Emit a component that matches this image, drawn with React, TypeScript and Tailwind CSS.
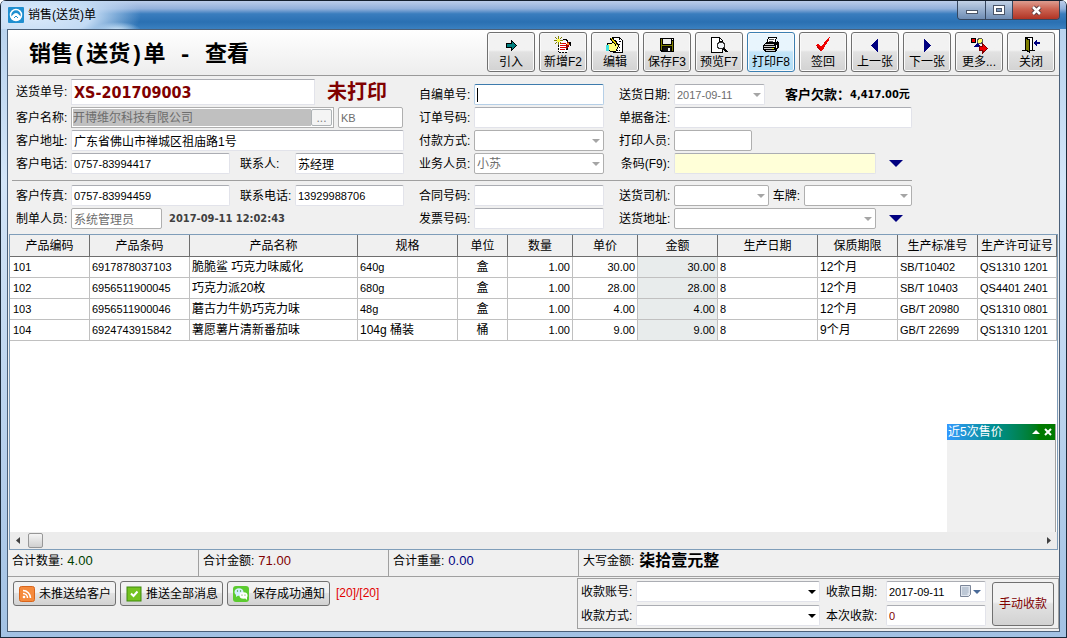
import { useState } from "react";
import type { ReactNode } from "react";
import clsx from "clsx";

const BOLD_FONT = "font-['DejaVu_Sans_Condensed','Noto_Sans_CJK_SC',sans-serif] font-bold";
const BUTTON_FACE = "border-[#707070] bg-linear-to-b from-[#f2f2f2] from-45% via-[#e2e2e2] via-50% to-[#d2d2d2]";

const columns = [
  { title: "产品编码", width: "w-[80px]", align: "text-left" },
  { title: "产品条码", width: "w-[100px]", align: "text-left" },
  { title: "产品名称", width: "w-[168px]", align: "text-left" },
  { title: "规格", width: "w-[100px]", align: "text-left" },
  { title: "单位", width: "w-[50px]", align: "text-center" },
  { title: "数量", width: "w-[65px]", align: "text-right" },
  { title: "单价", width: "w-[65px]", align: "text-right" },
  { title: "金额", width: "w-[80px]", align: "text-right bg-[#e8ecec]" },
  { title: "生产日期", width: "w-[100px]", align: "text-left" },
  { title: "保质期限", width: "w-[80px]", align: "text-left" },
  { title: "生产标准号", width: "w-[80px]", align: "text-left" },
  { title: "生产许可证号", width: "", align: "text-left" },
];

const rows = [
  ["101", "6917878037103", "脆脆鲨 巧克力味威化", "640g", "盒", "1.00", "30.00", "30.00", "8", "12个月", "SB/T10402", "QS1310 1201"],
  ["102", "6956511900045", "巧克力派20枚", "680g", "盒", "1.00", "28.00", "28.00", "8", "12个月", "SB/T 10403", "QS4401 2401"],
  ["103", "6956511900046", "蘑古力牛奶巧克力味", "48g", "盒", "1.00", "4.00", "4.00", "8", "12个月", "GB/T 20980", "QS1310 0801"],
  ["104", "6924743915842", "薯愿薯片清新番茄味", "104g 桶装", "桶", "1.00", "9.00", "9.00", "8", "9个月", "GB/T 22699", "QS1310 1201"],
];

const hasChinese = (text: string) => /[\u4e00-\u9fa5]/.test(text);

/* ---------- toolbar icons ---------- */

function ToolIcon({ children }: { children: ReactNode }) {
  return (
    <svg width="18" height="18" viewBox="0 0 18 18" shapeRendering="crispEdges" aria-hidden="true">
      {children}
    </svg>
  );
}

const importIcon = (
  <ToolIcon>
    <path d="M4 7h5V4l6 5.500L9 15v-3H4z" fill="#000" />
    <path d="M5 8h5V6l3.500 3.500L10 13v-2H5z" fill="#008080" />
  </ToolIcon>
);

const newIcon = (
  <ToolIcon>
    <path d="M4.500 4.500h7l2 2v9h-9z" fill="#fff" />
    <path d="M4 6v10M5 16.500h9" stroke="#000" strokeDasharray="2 1" />
    <path d="M9 3.500h3l2 2" stroke="#000" fill="none" />
    <path d="M6 7.500h6M6 9.500h7M6 11.500h7M6 13.500h5" stroke="#e00000" />
    <path d="M13 6h2l1 2-3 6h-1v-3z" fill="#a00000" />
    <path d="M13 7h2v2h-2z" fill="#ff9020" />
    <path d="M15 6h2v4h-1zM13 12h1v2h-2z" fill="#000" />
    <path d="M4.500 0v3M4.500 6v3M0 4.500h3M6 4.500h3M1 1l2 2M6 6l2 2M8 1L6 3M3 6L1 8" stroke="#808000" />
    <path d="M3 3h3v3H3z" fill="#ffff40" />
  </ToolIcon>
);

const editIcon = (
  <ToolIcon>
    <path d="M7.500 1.500h6l3 3v12h-9z" fill="#fff" stroke="#000" />
    <path d="M13 2v3h3M10 8h4M10 11h4M10 14h4" stroke="#000" fill="none" strokeDasharray="2 1" />
    <path d="M1 8l5-1 3-3 2 2-1 2h2v3l-2 4H4l-3-1z" fill="#ffff80" stroke="#000" />
    <path d="M0 9h3v6H0z" fill="#40e0e0" />
    <path d="M5 2l6 7" stroke="#000" strokeWidth="3" />
    <path d="M5 2l6 7" stroke="#e8d800" />
  </ToolIcon>
);

const saveIcon = (
  <ToolIcon>
    <path d="M2 2h14v14H3l-1-1z" fill="#000" />
    <path d="M3 3h1v11H3zM14 5h1v10h-1zM4 9h10v1H4z" fill="#808000" />
    <path d="M5 3h8v5H5z" fill="#eee" />
    <path d="M14 3h1v1h-1z" fill="#fff" />
    <path d="M5 11h8v4H5z" fill="#111" />
    <path d="M10 12h2v3h-2z" fill="#eee" />
  </ToolIcon>
);

const previewIcon = (
  <ToolIcon>
    <path d="M1.500 1.500h8l3 3v12h-11z" fill="#fff" stroke="#000" />
    <path d="M9.500 2v3h3" stroke="#000" fill="none" />
    <circle cx="11" cy="9.500" r="3.500" fill="#f0f4f8" stroke="#333" />
    <path d="M13.500 12l3.500 4" stroke="#000" strokeWidth="2" />
  </ToolIcon>
);

const printIcon = (
  <ToolIcon>
    <path d="M6.500 1.500h8l-2 6h-8z" fill="#fff" stroke="#000" />
    <path d="M7 3.500h5M7 5.500h4" stroke="#555" />
    <path d="M2 8l2-2h10l2-2v2l1 1v4l-3 5H3l-2-2V9z" fill="#000" />
    <path d="M3 8.500h9M2 10.500h11M2 12.500h8M4 14.500h9" stroke="#d0d0d0" fill="none" />
    <path d="M14 9h1v3h-1z" fill="#fff" />
    <path d="M10 12h2v1h-2z" fill="#ff0" />
  </ToolIcon>
);

const signIcon = (
  <ToolIcon>
    <path d="M2 9l2-1 3 3 6-8 3-2-1 3-7 11H6z" fill="#f00000" />
    <path d="M3 10l3 4h1" stroke="#c00000" fill="none" />
  </ToolIcon>
);

const prevIcon = (
  <ToolIcon>
    <path d="M12 3v13L5 9.500z" fill="#000080" />
  </ToolIcon>
);

const nextIcon = (
  <ToolIcon>
    <path d="M6 3v13l7-6.500z" fill="#000080" />
  </ToolIcon>
);

const moreIcon = (
  <ToolIcon>
    <path d="M1.500 2.500h4v4h-4z" fill="#f00000" stroke="#000" />
    <circle cx="10" cy="5" r="2.500" fill="#ffff60" stroke="#555" />
    <path d="M7 7l4 4H4z" fill="#000080" />
    <path d="M9.500 10.500h3v-3l5 5-5 4.500v-3h-3z" fill="#f00000" stroke="#800000" />
  </ToolIcon>
);

const closeIcon = (
  <ToolIcon>
    <path d="M3.500 1.500h7v13h-7z" fill="#fff" stroke="#000" />
    <path d="M3.500 2l4 2v12l-4-2z" fill="#808000" stroke="#000" />
    <path d="M0 14.500h3M10 14.500h3" stroke="#000" />
    <path d="M11 7l4-4v3h3v2h-3v3z" fill="#000080" />
  </ToolIcon>
);

const tools = [
  { label: "引入", icon: importIcon },
  { label: "新增F2", icon: newIcon },
  { label: "编辑", icon: editIcon },
  { label: "保存F3", icon: saveIcon },
  { label: "预览F7", icon: previewIcon },
  { label: "打印F8", icon: printIcon, active: true },
  { label: "签回", icon: signIcon },
  { label: "上一张", icon: prevIcon },
  { label: "下一张", icon: nextIcon },
  { label: "更多...", icon: moreIcon },
  { label: "关闭", icon: closeIcon },
];

/* ---------- form controls ---------- */

interface FieldProps {
  id: string;
  label: string;
  children: ReactNode;
  className?: string;
}

function Field({ id, label, children, className = "w-[55px] text-right pr-1" }: FieldProps) {
  return (
    <>
      <label htmlFor={id} className={clsx("shrink-0 whitespace-nowrap", className)}>
        {label}
      </label>
      {children}
    </>
  );
}

interface TextBoxProps {
  id: string;
  value?: string;
  className?: string;
  readOnly?: boolean;
}

function TextBox({ id, value = "", className, readOnly }: TextBoxProps) {
  const [text, setText] = useState(value);
  return (
    <input
      id={id}
      type="text"
      value={text}
      readOnly={readOnly}
      onChange={(e) => setText(e.target.value)}
      className={clsx(
        "h-[21px] min-w-0 rounded-xs border px-0.5 outline-none",
        hasChinese(text) ? "text-[12px]" : "text-[11px]",
        readOnly
          ? "border-[#afafaf] bg-white text-[#6d6d6d]"
          : "border-[#e2e3ea] border-t-[#abadb3]",
        className
      )}
    />
  );
}

interface SelectBoxProps {
  id: string;
  value?: string;
  className?: string;
  dark?: boolean;
  plain?: boolean;
}

function SelectBox({ id, value = "", className, dark, plain }: SelectBoxProps) {
  return (
    <span className={clsx("relative flex h-[21px] shrink-0", className)}>
      <select
        id={id}
        className={clsx(
          "h-full w-full appearance-none rounded-xs border bg-white pl-0.5 outline-none",
          hasChinese(value) ? "text-[12px]" : "text-[11px]",
          dark || plain ? "border-[#e2e3ea] border-t-[#abadb3]" : "border-[#afafaf]",
          dark ? "text-black" : "text-[#6d6d6d]"
        )}
      >
        <option>{value}</option>
      </select>
      <svg
        width="8"
        height="4"
        viewBox="0 0 8 4"
        className="pointer-events-none absolute right-1 top-[9px]"
        aria-hidden="true"
      >
        <path d="M0 0h8L4 4z" fill={dark ? "#000" : "#a5a5a5"} />
      </svg>
    </span>
  );
}

function ExpandButton({ label }: { label: string }) {
  return (
    <button aria-label={label} className="ml-3 flex h-4 w-4 items-center justify-center">
      <svg width="14" height="7" viewBox="0 0 14 7" aria-hidden="true">
        <path d="M0 0h14L7 7z" fill="#000080" />
      </svg>
    </button>
  );
}

function Row({ children }: { children: ReactNode }) {
  return <div className="flex h-[21px] items-center">{children}</div>;
}

/* ---------- window parts ---------- */

function TitleBar() {
  return (
    <header className="flex h-[29px] items-start justify-between border-t border-[#15202e] bg-[radial-gradient(ellipse_110px_40px_at_30px_14px,#dcebfb_0%,#c3dbf4_55%,transparent_100%),radial-gradient(ellipse_24px_8px_at_116px_29px,#d5eafa_0%,transparent_100%),linear-gradient(#bccdea_0%,#92b0db_28%,#3a7dbe_46%,#2a70b2_75%,#3a80c0_100%)]">
      <div className="flex h-[27px] items-center gap-1 pl-[7px]">
        <svg width="16" height="16" viewBox="0 0 16 16" aria-hidden="true">
          <rect width="16" height="16" rx="1" fill="#1f8fd0" />
          <circle cx="8" cy="8" r="5.500" fill="#1f8fd0" stroke="#fff" strokeWidth="1.500" />
          <path d="M2.500 10c2-1 3-4 5.500-4s3.500 3 5.500 4c-1 2-3 3.500-5.500 3.500S3.500 12 2.500 10z" fill="#fff" />
          <path d="M6 11l2-2 2 2" stroke="#1f8fd0" fill="none" />
        </svg>
        <span className="text-[12px]">销售(送货)单</span>
      </div>
      <div className="mr-1.5 flex h-[19px] overflow-hidden rounded-b-sm border border-t-0 border-[#35465e]">
        <button aria-label="最小化" className="flex w-7 items-end justify-center border-r border-[#35465e] bg-linear-to-b from-[#c3d2e6] via-[#9bb2d0] via-45% to-[#6f8db4] pb-1">
          <svg width="14" height="6" viewBox="0 0 14 6" aria-hidden="true">
            <rect x="1.500" y="1.500" width="11" height="3" fill="#fff" stroke="#4a5568" />
          </svg>
        </button>
        <button aria-label="最大化" className="flex w-[27px] items-center justify-center border-r border-[#35465e] bg-linear-to-b from-[#c3d2e6] via-[#9bb2d0] via-45% to-[#6f8db4]">
          <svg width="12" height="10" viewBox="0 0 12 10" aria-hidden="true">
            <rect x=".5" y=".5" width="11" height="9" fill="#fff" stroke="#4a5568" />
            <rect x="3.500" y="3.500" width="5" height="3" fill="#7d9abf" stroke="#4a5568" />
          </svg>
        </button>
        <button aria-label="关闭窗口" className="flex w-[46px] items-center justify-center bg-linear-to-b from-[#dd9d90] via-[#cc6352] via-45% to-[#b03324]">
          <svg width="13" height="11" viewBox="0 0 13 11" aria-hidden="true">
            <path d="M3 2l7 7M10 2L3 9" stroke="#54383c" strokeWidth="4.500" />
            <path d="M3 2l7 7M10 2L3 9" stroke="#fff" strokeWidth="2.500" />
          </svg>
        </button>
      </div>
    </header>
  );
}

function Toolbar() {
  return (
    <div className="flex h-[46px] items-start justify-between border-b border-[#999] bg-linear-to-b from-white to-[#ededed] pt-0.5 pr-1">
      <h1 className="pt-2 pl-[21px] font-['Liberation_Mono','Noto_Sans_CJK_SC',monospace] text-[22px] leading-8 font-bold whitespace-pre">
        销售(送货)单 - 查看
      </h1>
      <nav className="flex gap-1">
        {tools.map((tool) => (
          <button
            key={tool.label}
            className={clsx(
              "flex h-10 w-12 flex-col items-center rounded-[3px] border pt-[3px] text-[12px] leading-4 whitespace-nowrap inset-shadow-[0_0_0_1px_#fafafa]",
              tool.active
                ? "border-[#3c7fb1] bg-linear-to-b from-[#e8f5fd] from-45% via-[#c4e5f8] via-50% to-[#b0def6]"
                : BUTTON_FACE
            )}
          >
            {tool.icon}
            {tool.label}
          </button>
        ))}
      </nav>
    </div>
  );
}

function OrderForm() {
  return (
    <form className="h-[158px] pt-[3px] pl-2" onSubmit={(e) => e.preventDefault()}>
      <div className="flex gap-[15px]">
        <div className="flex w-[388px] flex-col gap-0.5">
          <div className="flex h-[26px] items-center">
            <Field id="orderNo" label="送货单号:">
              <input
                id="orderNo"
                defaultValue="XS-201709003"
                className={clsx(BOLD_FONT, "h-[26px] w-[244px] border border-[#e2e3ea] border-t-[#abadb3] bg-white px-0.5 text-[16px] text-[#800000]")}
              />
            </Field>
            <strong className="ml-3 text-[20px] leading-6 text-[#800000]">未打印</strong>
          </div>
          <Row>
            <Field id="customer" label="客户名称:">
              <span className="flex h-[21px] w-[263px] border border-[#afafaf] bg-white p-px">
                <input
                  id="customer"
                  readOnly
                  value="开博维尔科技有限公司"
                  className="min-w-0 flex-1 bg-[#c0c0c0] text-[12px] text-[#6d6d6d]"
                />
                <button aria-label="选择客户" className="w-[21px] rounded-xs border border-[#adb2b5] bg-[#f4f4f4] text-[12px] leading-3 text-[#838383]">
                  ...
                </button>
              </span>
            </Field>
            <input
              aria-label="客户简码"
              readOnly
              value="KB"
              className="ml-1 h-[21px] w-[65px] rounded-xs border border-[#afafaf] bg-white px-0.5 text-[11px] text-[#6d6d6d]"
            />
          </Row>
          <Row>
            <Field id="address" label="客户地址:">
              <TextBox id="address" value="广东省佛山市禅城区祖庙路1号" className="flex-1 bg-white" />
            </Field>
          </Row>
          <Row>
            <Field id="phone" label="客户电话:">
              <TextBox id="phone" value="0757-83994417" className="w-[159px] bg-white" />
            </Field>
            <Field id="contact" label="联系人:" className="ml-2.5 w-[55px]">
              <TextBox id="contact" value="苏经理" className="flex-1 bg-white" />
            </Field>
          </Row>
        </div>

        <div className="flex w-[185px] flex-col gap-0.5 pt-[5px]">
          <Row>
            <Field id="customNo" label="自编单号:">
              <span className="relative flex flex-1">
                <input id="customNo" className="h-[21px] w-full rounded-xs border border-[#b5cfe7] border-t-[#3d7bad] bg-white px-0.5 text-[11px]" />
                <i className="absolute top-1 left-[3px] h-3.5 w-px bg-black" />
              </span>
            </Field>
          </Row>
          <Row>
            <Field id="bookingNo" label="订单号码:">
              <TextBox id="bookingNo" className="flex-1 bg-white" />
            </Field>
          </Row>
          <Row>
            <Field id="payWay" label="付款方式:">
              <SelectBox id="payWay" className="w-[130px]" />
            </Field>
          </Row>
          <Row>
            <Field id="salesman" label="业务人员:">
              <SelectBox id="salesman" value="小苏" className="w-[130px]" />
            </Field>
          </Row>
        </div>

        <div className="flex flex-col gap-0.5 pt-[5px]">
          <Row>
            <Field id="deliveryDate" label="送货日期:">
              <SelectBox id="deliveryDate" value="2017-09-11" className="w-[91px]" plain />
            </Field>
            <span className="ml-5 text-[13px] font-bold">客户欠款：</span>
            <span className={clsx(BOLD_FONT, "text-[11px]")}>4,417.00元</span>
          </Row>
          <Row>
            <Field id="remark" label="单据备注:">
              <TextBox id="remark" className="w-[238px] bg-white" />
            </Field>
          </Row>
          <Row>
            <Field id="printer" label="打印人员:">
              <TextBox id="printer" className="w-[78px]" readOnly />
            </Field>
          </Row>
          <Row>
            <Field id="barcode" label="条码(F9):">
              <TextBox id="barcode" className="w-[202px] bg-[#ffffd8]" />
            </Field>
            <ExpandButton label="展开条码" />
          </Row>
        </div>
      </div>

      <hr className="mt-1.5 mb-1 -ml-1 w-[900px] border-[#a0a0a0]" />

      <div className="flex gap-[15px]">
        <div className="flex w-[388px] flex-col gap-0.5">
          <Row>
            <Field id="fax" label="客户传真:">
              <TextBox id="fax" value="0757-83994459" className="w-[159px] bg-white" />
            </Field>
            <Field id="mobile" label="联系电话:" className="ml-2.5 w-[55px]">
              <TextBox id="mobile" value="13929988706" className="flex-1 bg-white" />
            </Field>
          </Row>
          <Row>
            <Field id="maker" label="制单人员:">
              <TextBox id="maker" value="系统管理员" className="w-[91px]" readOnly />
            </Field>
            <time className={clsx(BOLD_FONT, "ml-[7px] text-[11px] text-[#404040]")}>2017-09-11 12:02:43</time>
          </Row>
        </div>
        <div className="flex w-[185px] flex-col gap-0.5">
          <Row>
            <Field id="contractNo" label="合同号码:">
              <TextBox id="contractNo" className="flex-1 bg-white" />
            </Field>
          </Row>
          <Row>
            <Field id="invoiceNo" label="发票号码:">
              <TextBox id="invoiceNo" className="flex-1 bg-white" />
            </Field>
          </Row>
        </div>
        <div className="flex flex-col gap-0.5">
          <Row>
            <Field id="driver" label="送货司机:">
              <SelectBox id="driver" className="w-[95px]" />
            </Field>
            <Field id="plate" label="车牌:" className="w-[35px] text-right pr-1">
              <SelectBox id="plate" className="w-[108px]" />
            </Field>
          </Row>
          <Row>
            <Field id="deliveryAddress" label="送货地址:">
              <SelectBox id="deliveryAddress" className="w-[202px]" />
            </Field>
            <ExpandButton label="展开送货地址" />
          </Row>
        </div>
      </div>
    </form>
  );
}

function ProductTable() {
  const [showPrices, setShowPrices] = useState(true);

  return (
    <section className="mr-px ml-px flex flex-1 flex-col border border-[#7f9db9] bg-white">
      <div className="relative flex-1">
        <table className="w-full table-fixed border-separate border-spacing-0">
          <thead>
            <tr className="h-[22px] bg-[#f0f0f0]">
              {columns.map((col) => (
                <th key={col.title} className={clsx("border-r border-b border-[#6e6e6e] p-0 text-[12px] leading-4 font-normal whitespace-nowrap", col.width)}>
                  {col.title}
                </th>
              ))}
            </tr>
          </thead>
          <tbody>
            {rows.map((row) => (
              <tr key={row[0]} className="h-[21px]">
                {row.map((cell, i) => (
                  <td
                    key={columns[i].title}
                    className={clsx(
                      "border-r border-b border-[#c0c0c0] px-0.5 py-0 leading-4 whitespace-nowrap first:pl-[3px]",
                      hasChinese(cell) ? "text-[12px]" : "text-[11px]",
                      columns[i].align
                    )}
                  >
                    {cell}
                  </td>
                ))}
              </tr>
            ))}
          </tbody>
        </table>
        {showPrices && (
          <aside className="absolute right-px bottom-0 h-[108px] w-[109px] border-r border-[#a0a0a0] bg-[#f0f0f0]">
            <div className="flex h-4 items-center bg-linear-to-r from-[#3399ff] to-[#007a00] to-85% pl-px text-[12px] leading-4 text-white">
              <span className="flex-1">近5次售价</span>
              <button aria-label="折叠" className="px-1">
                <svg width="8" height="4" viewBox="0 0 8 4" aria-hidden="true">
                  <path d="M0 4h8L4 0z" fill="#fff" />
                </svg>
              </button>
              <button aria-label="关闭近5次售价" className="pr-[3px]" onClick={() => setShowPrices(false)}>
                <svg width="8" height="8" viewBox="0 0 8 8" aria-hidden="true">
                  <path d="M1 1l6 6M7 1L1 7" stroke="#fff" strokeWidth="2" />
                </svg>
              </button>
            </div>
          </aside>
        )}
      </div>
      <div className="flex h-[17px] items-center bg-[#ececec] px-1.5">
        <svg width="4" height="7" viewBox="0 0 4 7" aria-hidden="true">
          <path d="M4 0v7L0 3.500z" fill="#404040" />
        </svg>
        <div className="ml-2 h-[15px] w-[15px] rounded-xs border border-[#979797] bg-linear-to-b from-[#f5f5f5] to-[#d0d0d0]" />
        <svg width="4" height="7" viewBox="0 0 4 7" className="ml-auto" aria-hidden="true">
          <path d="M0 0v7l4-3.500z" fill="#404040" />
        </svg>
      </div>
    </section>
  );
}

function Totals() {
  const cell = "flex items-center gap-1 border-[#a0a0a0] pb-1 pl-1";
  return (
    <div className="flex h-[27px] border-b border-[#a0a0a0]">
      <div className={clsx(cell, "w-[191px] border-r")}>
        合计数量:<span className="text-[13px] text-[#004000]">4.00</span>
      </div>
      <div className={clsx(cell, "w-[190px] border-r")}>
        合计金额:<span className="text-[13px] text-[#800000]">71.00</span>
      </div>
      <div className={clsx(cell, "w-[190px] border-r")}>
        合计重量:<span className="text-[13px] text-[#000080]">0.00</span>
      </div>
      <div className={cell}>
        大写金额:<strong className="ml-px text-[16px] leading-5">柒拾壹元整</strong>
      </div>
    </div>
  );
}

const pushButtons = [
  {
    label: "未推送给客户",
    icon: (
      <svg width="16" height="16" viewBox="0 0 16 16" aria-hidden="true">
        <rect x=".5" y=".5" width="15" height="15" rx="2" fill="#f58a3c" stroke="#d9651b" />
        <circle cx="5" cy="11" r="1.300" fill="#fff" />
        <path d="M4 7.500A4.500 4.500 0 0 1 8.500 12M4 4.500A7.500 7.500 0 0 1 11.500 12" stroke="#fff" strokeWidth="1.500" fill="none" />
      </svg>
    ),
  },
  {
    label: "推送全部消息",
    icon: (
      <svg width="16" height="16" viewBox="0 0 16 16" aria-hidden="true">
        <rect x="1" y="1" width="14" height="14" fill="#74c320" stroke="#3f8a0c" />
        <path d="M5 7.500L7.500 10l4-4.500" stroke="#fff" strokeWidth="2" fill="none" />
      </svg>
    ),
  },
  {
    label: "保存成功通知",
    icon: (
      <svg width="16" height="16" viewBox="0 0 16 16" aria-hidden="true">
        <rect width="16" height="16" rx="3" fill="#5ccb30" />
        <ellipse cx="6" cy="6" rx="4.500" ry="3.800" fill="#d4efff" />
        <path d="M3 8v3l3-2z" fill="#d4efff" />
        <ellipse cx="10.500" cy="9.500" rx="4" ry="3.300" fill="#fff" />
        <path d="M12 12l2 2v-3z" fill="#fff" />
        <circle cx="4.500" cy="5" r=".7" fill="#3a9a20" />
        <circle cx="7.500" cy="5" r=".7" fill="#3a9a20" />
        <circle cx="9" cy="9" r=".6" fill="#3a9a20" />
        <circle cx="12" cy="9" r=".6" fill="#3a9a20" />
      </svg>
    ),
  },
];

function Footer() {
  return (
    <footer className="flex h-[54px] justify-between">
      <div className="flex items-start gap-1 pt-1 pl-[5px]">
        {pushButtons.map((btn) => (
          <button
            key={btn.label}
            className={clsx(BUTTON_FACE, "flex h-[25px] w-[103px] items-center gap-1 rounded-[3px] border pl-[5px] whitespace-nowrap")}
          >
            {btn.icon}
            {btn.label}
          </button>
        ))}
        <span className="ml-0.5 text-[12px] leading-6 text-[#e00000]">[20]/[20]</span>
      </div>

      <div className="mt-px flex h-[51px] gap-1.5 border border-[#a0a0a0] pt-0.5 pr-1 pl-[3px]">
        <div className="flex flex-col gap-[3px]">
          <Row>
            <Field id="account" label="收款账号:">
              <SelectBox id="account" className="w-[184px]" dark />
            </Field>
          </Row>
          <Row>
            <Field id="receiveWay" label="收款方式:">
              <SelectBox id="receiveWay" className="w-[184px]" dark />
            </Field>
          </Row>
        </div>
        <div className="flex flex-col gap-[3px]">
          <Row>
            <Field id="receiveDate" label="收款日期:" className="w-[60px]">
              <span className="relative flex">
                <TextBox id="receiveDate" value="2017-09-11" className="w-[100px] bg-white" />
                <svg width="22" height="13" viewBox="0 0 22 13" className="absolute top-1 right-1" aria-hidden="true">
                  <path d="M.5.5h10v9l-2 2h-8z" fill="#dfe5ee" stroke="#7c8699" />
                  <path d="M2 3h7M2 5h7M2 7h7M2 9h5M3 2v8M5 2v8M7 2v8" stroke="#9fabc0" strokeWidth=".6" />
                  <path d="M13 5h8l-4 4z" fill="#4a6a98" />
                </svg>
              </span>
            </Field>
          </Row>
          <Row>
            <Field id="amount" label="本次收款:" className="w-[60px]">
              <TextBox id="amount" value="0" className="w-[100px] bg-white text-[#800000]" />
            </Field>
          </Row>
        </div>
        <button className={clsx(BUTTON_FACE, "mt-px h-11 w-[62px] rounded-[3px] border text-[#800000]")}>
          手动收款
        </button>
      </div>
    </footer>
  );
}

export default function App() {
  return (
    <div className="flex min-h-screen flex-col overflow-hidden rounded-t-md border-x border-b border-[#1c2a3a] bg-[#b3cbe6] font-['Liberation_Sans','Noto_Sans_CJK_SC',sans-serif] text-[12px] leading-4 text-black">
      <TitleBar />
      <div className="flex flex-1 bg-linear-to-b from-[#b9d3ee] via-[#d3e5f8] via-25% to-[#a3c2e4] px-1.5 pb-[5px]">
        <main className="flex flex-1 flex-col border border-[#4b6079] bg-[#f0f0f0]">
          <Toolbar />
          <OrderForm />
          <ProductTable />
          <Totals />
          <Footer />
        </main>
      </div>
    </div>
  );
}
